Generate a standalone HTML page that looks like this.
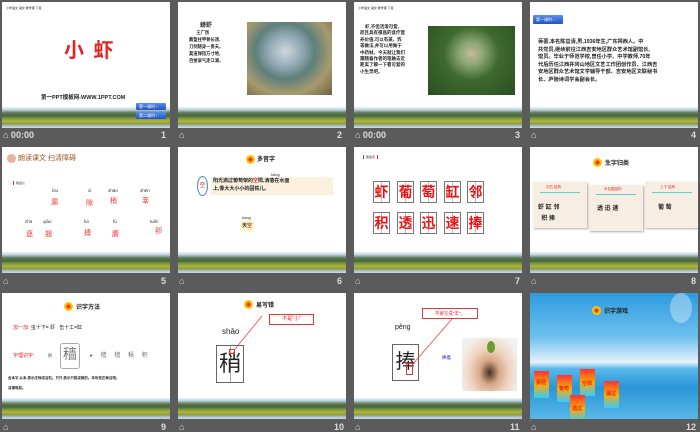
<!DOCTYPE html>
<html><head><meta charset="utf-8"><style>
*{margin:0;padding:0;box-sizing:border-box}
body{width:700px;height:431px;background:#5b5b5b;position:relative;overflow:hidden;font-family:"Liberation Sans","Noto Sans CJK SC",sans-serif}
.s{position:absolute;width:168px;height:126px;background:#fff;overflow:hidden}
.land{position:absolute;left:0;right:0;bottom:0;height:21px;background:linear-gradient(to bottom,#eef4f8 0,#c4d6e4 12%,#5d7a55 28%,#48663f 42%,#7c9a45 55%,#b6b33a 68%,#879d3c 80%,#a7c0d4 90%,#d0dde8 100%)}
.f{position:absolute;color:#ddd;font-size:9px;font-weight:bold}
.a{position:absolute;white-space:nowrap}
.r{color:#e52222}
.k{color:#222}
.btn{position:absolute;width:30px;height:7px;background:linear-gradient(#5b8fe8,#1f54c8);border-radius:1px;color:#fff;font-size:4px;line-height:7px;padding-left:3px}
.ic{position:absolute;width:9px;height:9px;border-radius:50%;background:radial-gradient(circle,#e33 20%,#f5c400 45%,#fbd400 100%)}
.box{position:absolute;width:17px;height:22px;border:1.5px solid #777;background:linear-gradient(90deg,transparent 7px,#bbb 7px,#bbb 8px,transparent 8px);color:#e11;font-size:14px;font-weight:bold;text-align:center;line-height:20px}
.t{font-size:6px;line-height:10px;font-weight:bold;color:#222}
.py{position:absolute;font-size:4.5px;color:#333}
.ch{position:absolute;font-size:7px;color:#e33}
</style></head><body>

<!-- row 1 -->
<div class="s" style="left:2px;top:2px">
 <div class="a k" style="left:4px;top:4px;font-size:3px">小学语文 语文 教学课 下载</div>
 <div class="a r" style="left:62px;top:32px;font-size:20px;font-weight:bold;letter-spacing:2px">小 虾</div>
 <div class="a k" style="left:39px;top:91px;font-size:5.5px;font-weight:bold">第一PPT模板网-WWW.1PPT.COM</div>
 <div class="land"></div>
 <div class="btn" style="left:134px;top:101px">第一课时 ›</div>
 <div class="btn" style="left:134px;top:110px">第二课时 ›</div>
</div>
<div class="f" style="left:3px;top:130px">⌂ 00:00</div><div class="f" style="left:161px;top:130px">1</div>

<div class="s" style="left:178px;top:2px">
 <div class="a k" style="left:22px;top:18px;font-size:6px;font-weight:bold">螃虾</div>
 <div class="a" style="left:11px;top:27px;font-size:4.3px;line-height:7px;color:#222;font-weight:bold">&nbsp;&nbsp;&nbsp;&nbsp;&nbsp;&nbsp;王广然<br>戴盔拄甲骨长须,<br>刀剑随身一勇夫。<br>莫道弹指方寸地,<br>自觉豪气走江湖。</div>
 <div class="a" style="left:69px;top:20px;width:85px;height:73px;background:radial-gradient(ellipse at 45% 40%,#cfd8dc 0,#93aab7 25%,#5e7f7a 45%,#a89a6e 70%,#6d6042 100%)"></div>
 <div class="land"></div>
</div>
<div class="f" style="left:179px;top:130px">⌂</div><div class="f" style="left:337px;top:130px">2</div>

<div class="s" style="left:354px;top:2px">
 <div class="a k" style="left:4px;top:4px;font-size:3px">小学语文 语文 教学课 下载</div>
 <div class="a" style="left:6px;top:22px;font-size:4.5px;line-height:6.4px;color:#222;font-weight:bold">&nbsp;&nbsp;&nbsp;&nbsp;虾,不但活泼可爱,<br>而且具有很高的食疗营<br>养价值,可以有蒸、炸<br>等做法,并可以用做于<br>中药材。今天就让我们<br>跟随着作者的笔触去近<br>距离了解一下看可爱的<br>小生灵吧。</div>
 <div class="a" style="left:74px;top:24px;width:87px;height:69px;background:radial-gradient(ellipse at 50% 40%,#c9b89a 0,#8fa87a 18%,#3e6a2e 45%,#2c4d22 100%)"></div>
 <div class="land"></div>
</div>
<div class="f" style="left:355px;top:130px">⌂ 00:00</div><div class="f" style="left:515px;top:130px">3</div>

<div class="s" style="left:530px;top:2px">
 <div class="btn" style="left:3px;top:13px;height:9px;line-height:9px">第一课时 ›</div>
 <div class="a t" style="left:8px;top:37px;font-size:5.2px;line-height:7.6px">蒋蘅,本名陈益清,男,1936年生,广东揭西人。中<br>共党员,继续前往江西吉安地区群众艺术馆副馆长,<br>馆员。毕业于师范学校,曾任小学、中学教师,70年<br>代后历任江西井冈山地区文艺工作团创作员、江西吉<br>安地区群众艺术馆文学辅导干部、吉安地区文联秘书<br>长、庐陵诗词学会副会长。</div>
 <div class="land"></div>
</div>
<div class="f" style="left:531px;top:130px">⌂</div><div class="f" style="left:691px;top:130px">4</div>

<!-- row 2 -->
<div class="s" style="left:2px;top:147px">
 <div class="ic" style="left:5px;top:7px;background:#e8b0a0"></div>
 <div class="a" style="left:16px;top:6px;font-size:7px;color:#a0551e">朗读课文 扫清障碍</div>
 <div class="a k" style="left:11px;top:34px;font-size:3px;border-left:1px solid #c33;padding-left:2px">我会认</div>
 <div class="py" style="left:50px;top:41px">lòu</div><div class="py" style="left:86px;top:41px">xì</div><div class="py" style="left:106px;top:41px">shāo</div><div class="py" style="left:138px;top:41px">shēn</div>
 <div class="ch" style="left:49px;top:50px">漏</div><div class="ch" style="left:84px;top:51px">隙</div><div class="ch" style="left:108px;top:49px">梢</div><div class="ch" style="left:140px;top:49px">莘</div>
 <div class="py" style="left:23px;top:72px">zhū</div><div class="py" style="left:41px;top:72px">qiào</div><div class="py" style="left:82px;top:72px">bó</div><div class="py" style="left:111px;top:72px">fù</div><div class="py" style="left:148px;top:72px">luǎn</div>
 <div class="ch" style="left:24px;top:82px">逐</div><div class="ch" style="left:43px;top:82px">翘</div><div class="ch" style="left:82px;top:81px">搏</div><div class="ch" style="left:110px;top:82px">腹</div><div class="ch" style="left:153px;top:79px">卵</div>
 <div class="land"></div>
</div>
<div class="f" style="left:3px;top:276px">⌂</div><div class="f" style="left:161px;top:276px">5</div>

<div class="s" style="left:178px;top:147px">
 <div class="ic" style="left:68px;top:8px"></div>
 <div class="a k" style="left:79px;top:7px;font-size:6px;font-weight:bold">多音字</div>
 <div class="a k" style="left:93px;top:25px;font-size:4px">kōng</div>
 <div class="a" style="left:19px;top:29px;width:11px;height:20px;border:1px solid #58a;border-radius:50%;color:#e22;font-size:6px;text-align:center;line-height:18px">空</div>
 <div class="a t" style="left:33px;top:30px;width:122px;height:18px;background:#fbf1de;font-size:5px;line-height:8px;padding-left:2px">阳光滴过葡萄架的<span class="r">空</span>隙,洒落在水面<br>上,像大大小小的圆铁儿。</div>
 <div class="a k" style="left:64px;top:68px;font-size:4px">kòng</div>
 <div class="a t" style="left:62px;top:74px;background:#fcf7c6;font-size:5px;padding:0 2px">天<span class="r">空</span></div>
 <div class="land"></div>
</div>
<div class="f" style="left:179px;top:276px">⌂</div><div class="f" style="left:337px;top:276px">6</div>

<div class="s" style="left:354px;top:147px">
 <div class="a k" style="left:9px;top:8px;font-size:3px;border-left:1px solid #c33;border-right:1px solid #c33;padding:0 2px">我会写</div>
 <div class="box" style="left:19px;top:34px">虾</div><div class="box" style="left:43px;top:34px">葡</div><div class="box" style="left:66px;top:34px">萄</div><div class="box" style="left:90px;top:34px">缸</div><div class="box" style="left:113px;top:34px">邻</div>
 <div class="box" style="left:19px;top:65px">积</div><div class="box" style="left:43px;top:65px">透</div><div class="box" style="left:66px;top:65px">迅</div><div class="box" style="left:90px;top:65px">速</div><div class="box" style="left:113px;top:65px">捧</div>
 <div class="land"></div>
</div>
<div class="f" style="left:355px;top:276px">⌂</div><div class="f" style="left:515px;top:276px">7</div>

<div class="s" style="left:530px;top:147px">
 <div class="ic" style="left:63px;top:11px"></div>
 <div class="a k" style="left:75px;top:11px;font-size:6px;font-weight:bold">生字归类</div>
 <div class="a" style="left:3px;top:35px;width:54px;height:46px;background:#f6ede3;box-shadow:1px 1px 2px #aaa"></div>
 <div class="a" style="left:59px;top:38px;width:54px;height:46px;background:#f6ede3;box-shadow:1px 1px 2px #aaa"></div>
 <div class="a" style="left:115px;top:35px;width:53px;height:46px;background:#f6ede3;box-shadow:1px 1px 2px #aaa"></div>
 <div class="a r" style="left:16px;top:38px;font-size:3.5px">左右 结构</div>
 <div class="a r" style="left:74px;top:40px;font-size:3.5px">半包围结构</div>
 <div class="a r" style="left:130px;top:38px;font-size:3.5px">上下 结构</div>
 <div class="a" style="left:10px;top:45px;width:40px;height:1px;background:#6cc"></div>
 <div class="a" style="left:66px;top:47px;width:40px;height:1px;background:#6cc"></div>
 <div class="a" style="left:122px;top:45px;width:40px;height:1px;background:#6cc"></div>
 <div class="a t" style="left:8px;top:56px;font-size:6px;line-height:11px">虾 缸 邻<br>&nbsp;&nbsp;积 捧</div>
 <div class="a t" style="left:67px;top:57px;font-size:6px">透 迅 速</div>
 <div class="a t" style="left:128px;top:56px;font-size:6px">葡 萄</div>
 <div class="land"></div>
</div>
<div class="f" style="left:531px;top:276px">⌂</div><div class="f" style="left:691px;top:276px">8</div>

<!-- row 3 -->
<div class="s" style="left:2px;top:293px">
 <div class="ic" style="left:62px;top:9px"></div>
 <div class="a k" style="left:74px;top:9px;font-size:6px;font-weight:bold">识字方法</div>
 <div class="a" style="left:11px;top:31px;font-size:5px"><span class="r">加一加:</span><span class="k"> 虫十下= 虾 &nbsp;&nbsp;缶十工=缸</span></div>
 <div class="a r" style="left:11px;top:59px;font-size:5px">字理识字:</div>
 <div class="a k" style="left:46px;top:60px;font-size:4px">积</div>
 <div class="a" style="left:58px;top:50px;width:20px;height:26px;border:1px solid #aaa;border-radius:3px;font-size:14px;color:#777;text-align:center">穑</div>
 <div class="a" style="left:88px;top:57px;font-size:6px;color:#777;letter-spacing:3px">▸ 穑 穑 積 积</div>
 <div class="a t" style="left:6px;top:80px;font-size:3.5px;line-height:10px">含禾字,从禾,表示庄稼或谷粒。只只,表示只能或做的。本有是庄稼谷物。<br>或谓堆积。</div>
 <div class="land"></div>
</div>
<div class="f" style="left:3px;top:422px">⌂</div><div class="f" style="left:161px;top:422px">9</div>

<div class="s" style="left:178px;top:293px">
 <div class="ic" style="left:66px;top:7px"></div>
 <div class="a k" style="left:78px;top:7px;font-size:6px;font-weight:bold">易写错</div>
 <div class="a" style="left:91px;top:21px;width:45px;height:11px;border:1px solid #e33;color:#e22;font-size:5px;text-align:center;line-height:9px">不是"小"</div>
 <div class="a k" style="left:44px;top:34px;font-size:8px">shāo</div>
 <div class="a" style="left:38px;top:52px;width:28px;height:38px;border:1px solid #666;background:linear-gradient(90deg,transparent 13px,#aaa 13px,#aaa 14px,transparent 14px);font-size:22px;color:#222;text-align:center;line-height:36px">稍</div>
 <div class="a" style="left:51px;top:56px;width:6px;height:5px;border:1px solid #e33"></div>
 <svg class="a" style="left:0;top:0" width="168" height="126"><line x1="57" y1="56" x2="84" y2="23" stroke="#e33" stroke-width="0.7"/></svg>
 <div class="land"></div>
</div>
<div class="f" style="left:179px;top:422px">⌂</div><div class="f" style="left:334px;top:422px">10</div>

<div class="s" style="left:354px;top:293px">
 <div class="a" style="left:68px;top:15px;width:56px;height:11px;border:1px solid #e33;color:#e22;font-size:4.5px;text-align:center;line-height:9px">不要写成"丰"。</div>
 <div class="a k" style="left:41px;top:31px;font-size:7px">pěng</div>
 <div class="a" style="left:38px;top:51px;width:27px;height:37px;border:1px solid #666;font-size:20px;color:#222;text-align:center;line-height:34px">捧</div>
 <div class="a" style="left:52px;top:70px;width:7px;height:12px;border:1px solid #e33"></div>
 <svg class="a" style="left:0;top:0" width="168" height="126"><line x1="58" y1="72" x2="98" y2="26" stroke="#e33" stroke-width="0.7"/></svg>
 <div class="a" style="left:88px;top:62px;font-size:4.5px;color:#22c">捧着</div>
 <div class="a" style="left:108px;top:45px;width:55px;height:53px;background:radial-gradient(ellipse at 50% 65%,#4a3020 0,#d7a88a 25%,#efd3c0 50%,#f2f0ec 80%)"></div>
 <div class="a" style="left:133px;top:48px;width:8px;height:12px;background:#6a9e2c;border-radius:50%"></div>
 <div class="land"></div>
</div>
<div class="f" style="left:355px;top:422px">⌂</div><div class="f" style="left:510px;top:422px">11</div>

<div class="s" style="left:530px;top:293px;background:linear-gradient(to bottom,#2d9be0 0,#6ec0ee 35%,#e6f3fb 55%,#59b9e9 60%,#2a95d8 75%,#58b8e6 100%)">
 <div class="a" style="left:140px;top:0;width:22px;height:30px;border-radius:50%;background:rgba(255,255,255,.35)"></div>
 <div class="ic" style="left:62px;top:13px"></div>
 <div class="a k" style="left:74px;top:13px;font-size:6px;font-weight:bold">识字游戏</div>
 <div class="a" style="left:4px;top:78px;width:15px;height:27px;background:linear-gradient(#f33,#fa0,#3cf)"></div>
 <div class="a" style="left:27px;top:82px;width:15px;height:27px;background:linear-gradient(#f33,#fa0,#3cf)"></div>
 <div class="a" style="left:50px;top:76px;width:15px;height:27px;background:linear-gradient(#f33,#fa0,#3cf)"></div>
 <div class="a" style="left:40px;top:102px;width:15px;height:27px;background:linear-gradient(#f33,#fa0,#3cf)"></div>
 <div class="a" style="left:74px;top:88px;width:15px;height:27px;background:linear-gradient(#f33,#fa0,#3cf)"></div>
 <div class="a r" style="left:6px;top:86px;font-size:5px;font-weight:bold">委屈</div>
 <div class="a r" style="left:29px;top:92px;font-size:5px;font-weight:bold">葡萄</div>
 <div class="a r" style="left:52px;top:87px;font-size:5px;font-weight:bold">空隙</div>
 <div class="a r" style="left:42px;top:112px;font-size:5px;font-weight:bold">透过</div>
 <div class="a r" style="left:76px;top:97px;font-size:5px;font-weight:bold">漏过</div>
</div>
<div class="f" style="left:531px;top:422px">⌂</div><div class="f" style="left:686px;top:422px">12</div>

</body></html>
